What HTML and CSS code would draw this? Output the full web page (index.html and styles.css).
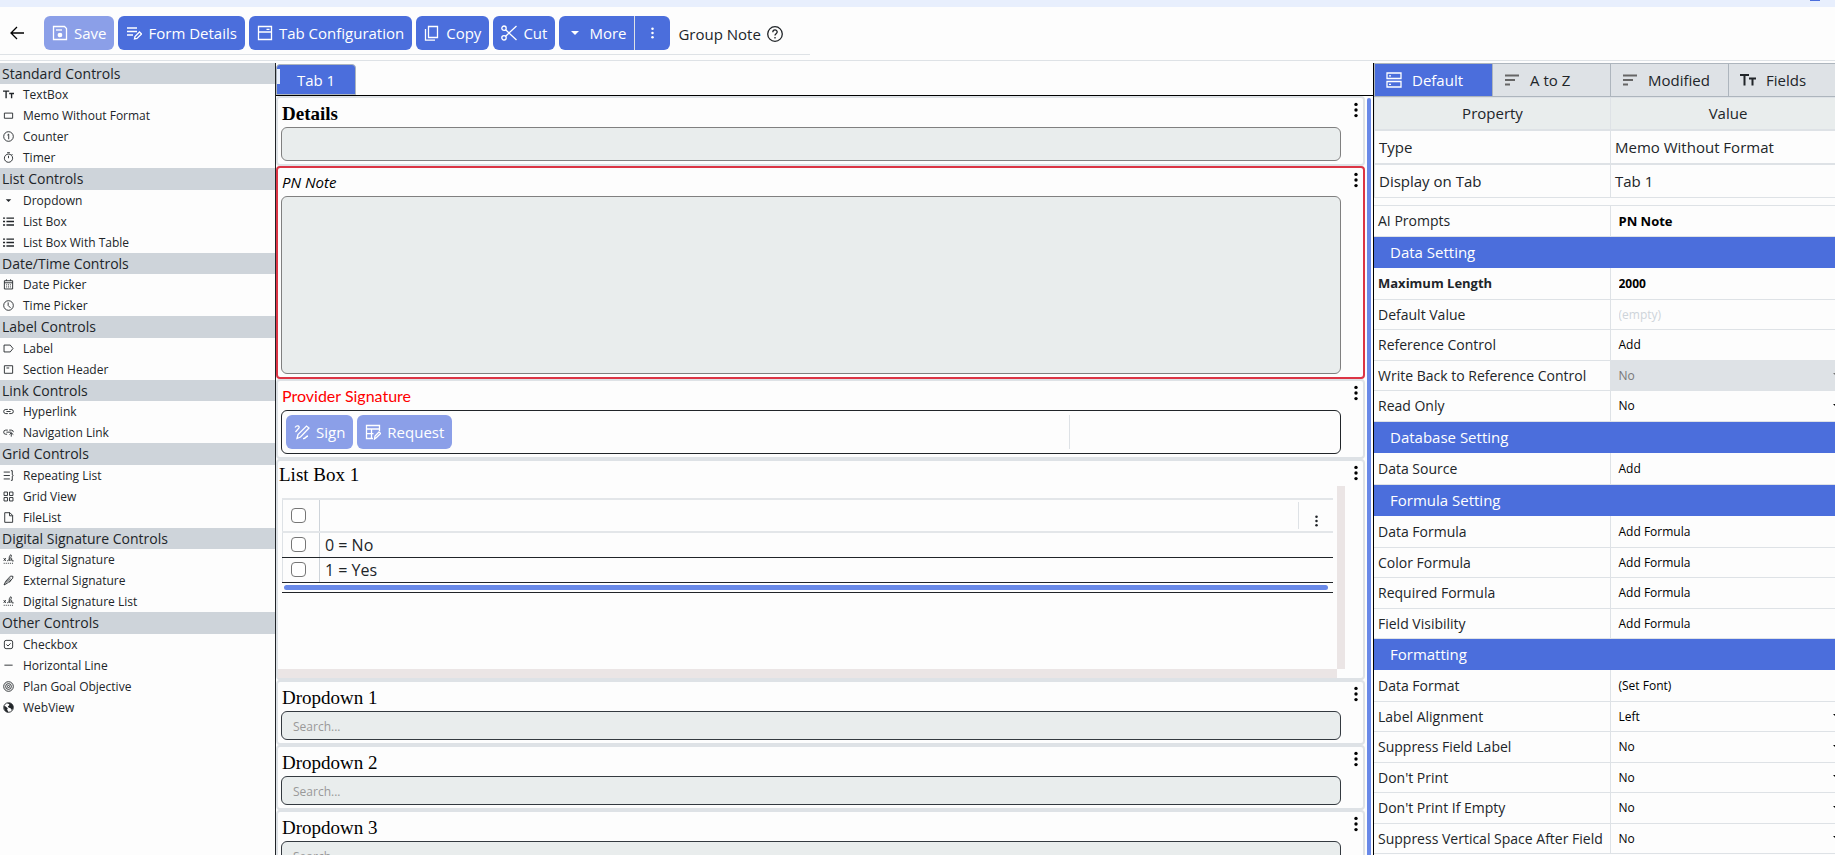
FILE: index.html
```
<!DOCTYPE html>
<html lang="en">
  <head>
    <meta charset="utf-8">
    <title>Form Designer - Group Note</title>
    <link rel="stylesheet" href="styles.css">
  </head>
  <body>
    <!-- icon sprite -->
    <svg class="sprite" aria-hidden="true">
      <symbol id="i-back" viewBox="0 0 16 16"><path d="M15 8H2M8 2L2 8l6 6"/></symbol>
      <symbol id="i-save" viewBox="0 0 16 16"><path d="M1.500 1.500h11l2 2v11h-13z"/><path d="M4 5h6"/><circle cx="8" cy="10" r="1.700" fill="currentColor"/></symbol>
      <symbol id="i-form" viewBox="0 0 16 16"><path d="M1 3h10M1 6.500h10M1 10h6M8.500 14l.5-2.500 4.500-4.500 2 2-4.500 4.500z"/></symbol>
      <symbol id="i-tabs" viewBox="0 0 16 16"><path d="M1.500 1.500h13v13h-13zM1.500 7h13M9.500 4.300h3" /></symbol>
      <symbol id="i-copy" viewBox="0 0 16 16"><path d="M4.500 1.500h9v11h-9zM1.500 4v11.200h9.500"/></symbol>
      <symbol id="i-cut" viewBox="0 0 16 16"><circle cx="3" cy="3.200" r="2.200"/><circle cx="3" cy="12.800" r="2.200"/><path d="M4.600 4.800L15.500 15M4.600 11.200L15.500 1"/></symbol>
      <symbol id="i-caret" viewBox="0 0 16 16"><path d="M4 6h8l-4 4z" fill="currentColor" stroke="none"/></symbol>
      <symbol id="i-dots" viewBox="0 0 4 16"><g fill="currentColor" stroke="none"><circle cx="2" cy="2.400" r="1.700"/><circle cx="2" cy="8" r="1.700"/><circle cx="2" cy="13.600" r="1.700"/></g></symbol>
      <symbol id="i-help" viewBox="0 0 16 16"><circle cx="8" cy="8" r="7.300"/><path d="M5.800 6.200C5.800 3.200 10.200 3.300 10.200 6c0 1.700-2.200 1.700-2.200 3.500"/><path d="M8 11v1.500"/></symbol>
      <symbol id="i-text" viewBox="0 0 16 16"><path d="M0 3h9M4.500 3v10.500M9 6.500h7M12.500 6.500v7" stroke-width="2"/></symbol>
      <symbol id="i-memo" viewBox="0 0 16 16"><path d="M2 4.500h12v7.500H2z"/></symbol>
      <symbol id="i-count" viewBox="0 0 16 16"><circle cx="8" cy="8" r="7"/><path d="M6.300 6L8.300 4.500v7.500"/></symbol>
      <symbol id="i-timer" viewBox="0 0 16 16"><circle cx="8" cy="9" r="6"/><path d="M6 1h4M8 5.500V9M12.500 3l1.500 1.500"/></symbol>
      <symbol id="i-list" viewBox="0 0 16 16"><path d="M0 3h3M5 3h11M0 8h3M5 8h11M0 13h3M5 13h11" stroke-width="2"/></symbol>
      <symbol id="i-date" viewBox="0 0 16 16"><path d="M2 2.500h12v12H2zM2 5.500h12M5 .5v2M11 .5v2"/><path d="M4.500 8.500h7M4.500 11.500h7" stroke-dasharray="1.500 1.300"/></symbol>
      <symbol id="i-clock" viewBox="0 0 16 16"><circle cx="8" cy="8" r="7"/><path d="M7.500 3.500V8l3.500 3.500"/></symbol>
      <symbol id="i-label" viewBox="0 0 16 16"><path d="M1.500 3h9l4 5-4 5h-9z"/></symbol>
      <symbol id="i-section" viewBox="0 0 16 16"><path d="M2 2.500h12v11H2zM5 5.800h4"/></symbol>
      <symbol id="i-link" viewBox="0 0 16 16"><path d="M7 5H4a3 3 0 0 0 0 6h3M9 5h3a3 3 0 0 1 0 6H9M5 8h6"/></symbol>
      <symbol id="i-navlink" viewBox="0 0 16 16"><path d="M7 4.500H4a3 3 0 0 0 0 6h2M9 4.500h3a3 3 0 0 1 3 3M5 7.500h7M12 14V8.500M9.500 11L12 8.500l3 2.500"/></symbol>
      <symbol id="i-repeat" viewBox="0 0 16 16"><path d="M1 3h9M1 8h9M1 13h9M11.500 1h2v6l1.500 1-1.500 1v6h-2"/></symbol>
      <symbol id="i-grid" viewBox="0 0 16 16"><path d="M1.500 1.500h5v5h-5zM9.500 1.500h5v5h-5zM1.500 9.500h5v5h-5zM9.500 9.500h5v5h-5z"/></symbol>
      <symbol id="i-file" viewBox="0 0 16 16"><path d="M2.500 1h7.500l4 4v10h-11.500zM9.500 1v4.500H14"/></symbol>
      <symbol id="i-sig" viewBox="0 0 16 16"><path d="M1 6l3 4M4 6l-3 4M6 10c3-1 7-6 6-8.500-2-1.500-4 4-2.500 8 1.500 1 3-3 3-3l.5 3.500h2.500"/><path d="M1 13.500h14" stroke-dasharray="1.500 1.500"/></symbol>
      <symbol id="i-pen" viewBox="0 0 16 16"><path d="M1.500 14.500L4 9l7-7.500 3.500.5-.5 3-8 7zM4 11l7-6.500M12 7l-3 4"/></symbol>
      <symbol id="i-check" viewBox="0 0 16 16"><rect x="2" y="2" width="12" height="12" rx="2.500"/><path d="M5 8l2.300 2.200L11 6.300"/></symbol>
      <symbol id="i-line" viewBox="0 0 16 16"><path d="M2 7.500h12"/></symbol>
      <symbol id="i-goal" viewBox="0 0 16 16"><circle cx="8" cy="8" r="7"/><circle cx="8" cy="8" r="4.200"/><circle cx="8" cy="8" r="1.600"/></symbol>
      <symbol id="i-web" viewBox="0 0 16 16"><circle cx="8" cy="8" r="7"/><path d="M2 5l5 4-1 2 2 4C3 15 .5 10 2 5zM6 2l3 1v2l-2 1 1 2 3 1 2 3c2-2 3-6 0-9-2-2-5-2-7-1z" fill="currentColor" stroke="none"/></symbol>
      <symbol id="i-sign" viewBox="0 0 16 16"><path d="M1 3.500c2-3 5-1.500 4 .5L1.500 8M3 14.500l1-4L12.500 2l2.500 2-8.500 9zM9 14.500c3 .5 2-2 5-2.500"/></symbol>
      <symbol id="i-request" viewBox="0 0 16 16"><path d="M8 14.500H1.500v-13h13V7M1.500 5h13M1.500 9.700h7M6.500 5v9.500M9.500 15l.5-3 4-4 1.500 1.500-4 4z"/></symbol>
      <symbol id="i-default" viewBox="0 0 16 16"><path d="M1 1h14v5.500H1zM1 9.500h14V15H1zM3 3.800h2M3 12.300h2"/></symbol>
      <symbol id="i-sort" viewBox="0 0 16 16"><path d="M1 3.500h14M1 8h10M1 12.500h5" stroke-width="1.800"/></symbol>
    </svg>

    <div class="strip"><span class="strip-mark"></span></div>

    <header class="header">
      <div class="toolbar">
        <button class="back" aria-label="Back"><svg class="icon"><use href="#i-back"/></svg></button>
        <button class="btn" disabled><svg class="icon"><use href="#i-save"/></svg>Save</button>
        <button class="btn"><svg class="icon"><use href="#i-form"/></svg>Form Details</button>
        <button class="btn"><svg class="icon"><use href="#i-tabs"/></svg>Tab Configuration</button>
        <button class="btn"><svg class="icon"><use href="#i-copy"/></svg>Copy</button>
        <button class="btn"><svg class="icon"><use href="#i-cut"/></svg>Cut</button>
        <div class="btn-group">
          <button class="btn btn-more"><svg class="icon"><use href="#i-caret"/></svg>More</button>
          <button class="btn btn-dots" aria-label="Options"><svg class="dots"><use href="#i-dots"/></svg></button>
        </div>
        <span class="form-name">Group Note <svg class="icon"><use href="#i-help"/></svg></span>
      </div>
    </header>

    <main class="designer">
      <nav class="palette">
        <section class="group">
          <h2>Standard Controls</h2>
          <ul>
            <li><svg class="icon"><use href="#i-text"/></svg>TextBox</li>
            <li><svg class="icon"><use href="#i-memo"/></svg>Memo Without Format</li>
            <li><svg class="icon"><use href="#i-count"/></svg>Counter</li>
            <li><svg class="icon"><use href="#i-timer"/></svg>Timer</li>
          </ul>
        </section>
        <section class="group">
          <h2>List Controls</h2>
          <ul>
            <li><svg class="icon"><use href="#i-caret"/></svg>Dropdown</li>
            <li><svg class="icon"><use href="#i-list"/></svg>List Box</li>
            <li><svg class="icon"><use href="#i-list"/></svg>List Box With Table</li>
          </ul>
        </section>
        <section class="group">
          <h2>Date/Time Controls</h2>
          <ul>
            <li><svg class="icon"><use href="#i-date"/></svg>Date Picker</li>
            <li><svg class="icon"><use href="#i-clock"/></svg>Time Picker</li>
          </ul>
        </section>
        <section class="group">
          <h2>Label Controls</h2>
          <ul>
            <li><svg class="icon"><use href="#i-label"/></svg>Label</li>
            <li><svg class="icon"><use href="#i-section"/></svg>Section Header</li>
          </ul>
        </section>
        <section class="group">
          <h2>Link Controls</h2>
          <ul>
            <li><svg class="icon"><use href="#i-link"/></svg>Hyperlink</li>
            <li><svg class="icon"><use href="#i-navlink"/></svg>Navigation Link</li>
          </ul>
        </section>
        <section class="group">
          <h2>Grid Controls</h2>
          <ul>
            <li><svg class="icon"><use href="#i-repeat"/></svg>Repeating List</li>
            <li><svg class="icon"><use href="#i-grid"/></svg>Grid View</li>
            <li><svg class="icon"><use href="#i-file"/></svg>FileList</li>
          </ul>
        </section>
        <section class="group">
          <h2>Digital Signature Controls</h2>
          <ul>
            <li><svg class="icon"><use href="#i-sig"/></svg>Digital Signature</li>
            <li><svg class="icon"><use href="#i-pen"/></svg>External Signature</li>
            <li><svg class="icon"><use href="#i-sig"/></svg>Digital Signature List</li>
          </ul>
        </section>
        <section class="group">
          <h2>Other Controls</h2>
          <ul>
            <li><svg class="icon"><use href="#i-check"/></svg>Checkbox</li>
            <li><svg class="icon"><use href="#i-line"/></svg>Horizontal Line</li>
            <li><svg class="icon"><use href="#i-goal"/></svg>Plan Goal Objective</li>
            <li><svg class="icon"><use href="#i-web"/></svg>WebView</li>
          </ul>
        </section>
      </nav>

      <div class="canvas">
        <div class="form-tabs"><button class="form-tab">Tab 1</button></div>
        <div class="form-scroll">
          <div class="cards">
            <section class="card">
              <div class="card-body">
                <label class="card-label bold" for="details">Details</label>
                <input class="field" id="details" type="text">
              </div>
              <button class="card-menu" aria-label="Details menu"><svg class="dots"><use href="#i-dots"/></svg></button>
            </section>
            <section class="card selected">
              <div class="card-body">
                <label class="card-label italic" for="pn-note">PN Note</label>
                <textarea class="field memo" id="pn-note"></textarea>
              </div>
              <button class="card-menu" aria-label="PN Note menu"><svg class="dots"><use href="#i-dots"/></svg></button>
            </section>
            <section class="card">
              <div class="card-body">
                <span class="card-label required">Provider Signature</span>
                <div class="signature">
                  <div class="signature-actions">
                    <button class="btn" disabled><svg class="icon"><use href="#i-sign"/></svg>Sign</button>
                    <button class="btn" disabled><svg class="icon"><use href="#i-request"/></svg>Request</button>
                  </div>
                  <div class="signature-date"></div>
                </div>
              </div>
              <button class="card-menu" aria-label="Provider Signature menu"><svg class="dots"><use href="#i-dots"/></svg></button>
            </section>
            <section class="card card-list">
              <div class="card-body">
                <span class="card-label">List Box 1</span>
                <div class="list-area">
                  <div class="list-main">
                    <table class="list-table">
                      <thead>
                        <tr>
                          <th class="tick"><input type="checkbox" aria-label="Select all"></th>
                          <th><div class="list-head"><button class="list-menu" aria-label="Column menu"><svg class="dots"><use href="#i-dots"/></svg></button></div></th>
                        </tr>
                      </thead>
                      <tbody>
                        <tr>
                          <td class="tick"><input type="checkbox" id="opt-no"></td>
                          <td><label for="opt-no">0 = No</label></td>
                        </tr>
                        <tr>
                          <td class="tick"><input type="checkbox" id="opt-yes"></td>
                          <td><label for="opt-yes">1 = Yes</label></td>
                        </tr>
                      </tbody>
                    </table>
                    <div class="list-scroll"><div class="thumb"></div></div>
                  </div>
                  <div class="track"></div>
                </div>
                <div class="track-bottom"></div>
              </div>
              <button class="card-menu" aria-label="List Box 1 menu"><svg class="dots"><use href="#i-dots"/></svg></button>
            </section>
            <section class="card">
              <div class="card-body">
                <label class="card-label" for="dd1">Dropdown 1</label>
                <input class="field search" id="dd1" type="text" placeholder="Search...">
              </div>
              <button class="card-menu" aria-label="Dropdown 1 menu"><svg class="dots"><use href="#i-dots"/></svg></button>
            </section>
            <section class="card">
              <div class="card-body">
                <label class="card-label" for="dd2">Dropdown 2</label>
                <input class="field search" id="dd2" type="text" placeholder="Search...">
              </div>
              <button class="card-menu" aria-label="Dropdown 2 menu"><svg class="dots"><use href="#i-dots"/></svg></button>
            </section>
            <section class="card">
              <div class="card-body">
                <label class="card-label" for="dd3">Dropdown 3</label>
                <input class="field search" id="dd3" type="text" placeholder="Search...">
              </div>
              <button class="card-menu" aria-label="Dropdown 3 menu"><svg class="dots"><use href="#i-dots"/></svg></button>
            </section>
          </div>
          <div class="scrollbar"></div>
        </div>
      </div>

      <aside class="properties">
        <div class="prop-tabs">
          <button class="prop-tab active"><svg class="icon"><use href="#i-default"/></svg>Default</button>
          <button class="prop-tab"><svg class="icon"><use href="#i-sort"/></svg>A to Z</button>
          <button class="prop-tab"><svg class="icon"><use href="#i-sort"/></svg>Modified</button>
          <button class="prop-tab"><svg class="icon"><use href="#i-text"/></svg>Fields</button>
        </div>
        <table class="summary">
          <thead>
            <tr><th>Property</th><th>Value</th></tr>
          </thead>
          <tbody>
            <tr><td>Type</td><td>Memo Without Format</td></tr>
            <tr><td>Display on Tab</td><td>Tab 1</td></tr>
          </tbody>
        </table>
        <table class="props">
          <tbody>
            <tr class="peek"><td></td><td></td></tr>
            <tr><th>AI Prompts</th><td class="bold">PN Note</td></tr>
          </tbody>
          <tbody>
            <tr class="section"><th colspan="2">Data Setting</th></tr>
            <tr><th class="bold"><label for="p-max">Maximum Length</label></th><td class="bold"><input id="p-max" type="text" value="2000"></td></tr>
            <tr><th><label for="p-default">Default Value</label></th><td><input id="p-default" type="text" placeholder="(empty)"></td></tr>
            <tr><th>Reference Control</th><td><button>Add</button></td></tr>
            <tr><th><label for="p-write">Write Back to Reference Control</label></th><td class="off"><div class="pick"><select id="p-write" disabled><option>No</option></select></div></td></tr>
            <tr><th><label for="p-read">Read Only</label></th><td><div class="pick"><select id="p-read"><option>No</option></select></div></td></tr>
          </tbody>
          <tbody>
            <tr class="section"><th colspan="2">Database Setting</th></tr>
            <tr><th>Data Source</th><td><button>Add</button></td></tr>
          </tbody>
          <tbody>
            <tr class="section"><th colspan="2">Formula Setting</th></tr>
            <tr><th>Data Formula</th><td><button>Add Formula</button></td></tr>
            <tr><th>Color Formula</th><td><button>Add Formula</button></td></tr>
            <tr><th>Required Formula</th><td><button>Add Formula</button></td></tr>
            <tr><th>Field Visibility</th><td><button>Add Formula</button></td></tr>
          </tbody>
          <tbody>
            <tr class="section"><th colspan="2">Formatting</th></tr>
            <tr><th>Data Format</th><td><button>(Set Font)</button></td></tr>
            <tr><th><label for="p-align">Label Alignment</label></th><td><div class="pick"><select id="p-align"><option>Left</option></select></div></td></tr>
            <tr><th><label for="p-suppress">Suppress Field Label</label></th><td><div class="pick"><select id="p-suppress"><option>No</option></select></div></td></tr>
            <tr><th><label for="p-print">Don't Print</label></th><td><div class="pick"><select id="p-print"><option>No</option></select></div></td></tr>
            <tr><th><label for="p-empty">Don't Print If Empty</label></th><td><div class="pick"><select id="p-empty"><option>No</option></select></div></td></tr>
            <tr><th><label for="p-space">Suppress Vertical Space After Field</label></th><td><div class="pick"><select id="p-space"><option>No</option></select></div></td></tr>
          </tbody>
        </table>
      </aside>
    </main>
  </body>
</html>
```
FILE: styles.css
```
* {
  box-sizing: border-box;
}

body {
  margin: 0;
  height: 100vh;
  display: flex;
  flex-direction: column;
  overflow: hidden;
  background: #fdfdfd;
  color: #212529;
  font-family: "Open Sans", "Noto Sans", sans-serif;
  font-size: 15px;
}

button, input, select, textarea {
  font: inherit;
  color: inherit;
  margin: 0;
}

button {
  border: 0;
  padding: 0;
  background: none;
  cursor: pointer;
}

.sprite {
  display: none;
}

.icon {
  width: 16px;
  height: 16px;
  flex: none;
  fill: none;
  stroke: currentColor;
  stroke-width: 1.3;
}

.dots {
  width: 4px;
  height: 16px;
  fill: currentColor;
}

.bold {
  font-weight: 700;
}

/* Header */
.strip {
  flex: none;
  height: 7px;
  padding-right: 15px;
  display: flex;
  justify-content: flex-end;
  background: #e8effd;
}

.strip-mark {
  width: 10px;
  height: 1px;
  background: #4b6edc;
}

.header {
  flex: none;
  display: flex;
  padding-bottom: 5px;
  border-bottom: 1px solid #dee2e6;
  margin-bottom: 2px;
}

.toolbar {
  display: flex;
  gap: 4px;
  padding: 9px 27px 4px 8px;
  border-bottom: 1px solid #dee2e6;
}

.back {
  width: 32px;
  padding-left: 1px;
  display: flex;
  align-items: center;
  color: #000;
}

.btn {
  height: 34px;
  padding: 0 8px;
  display: flex;
  align-items: center;
  gap: 6px;
  border-radius: 6px;
  background: #4b6edc;
  color: #fff;
}

.btn:disabled {
  background: #8b9fe8;
}

.btn-group {
  display: flex;
}

.btn-more {
  border-radius: 6px 0 0 6px;
  border-right: 1px solid #dee2e6;
}

.btn-dots {
  width: 35px;
  justify-content: center;
  border-radius: 0 6px 6px 0;
}

.btn-dots .dots, .list-menu .dots {
  width: 3px;
  height: 12px;
}

.form-name {
  display: flex;
  align-items: center;
  gap: 6px;
  padding: 2px 0 0 4px;
}

/* Columns */
.designer {
  flex: 1;
  min-height: 0;
  display: grid;
  grid-template-columns: 276px 1fr 462px;
}

/* Left palette */
.palette {
  border-right: 1px solid #212529;
  overflow: hidden;
}

.group h2 {
  margin: 0;
  padding-left: 2px;
  background: #ced4da;
  font-size: 14px;
  font-weight: 400;
  line-height: 21px;
}

.group:nth-child(even) h2 {
  line-height: 22px;
}

.group ul {
  margin: 0;
  padding: 0;
  list-style: none;
}

.group li {
  display: flex;
  align-items: center;
  gap: 9px;
  height: 21px;
  padding-left: 3px;
  font-size: 12px;
}

.group .icon {
  width: 11px;
  height: 11px;
}

/* Form canvas */
.canvas {
  display: flex;
  flex-direction: column;
  min-width: 0;
  min-height: 0;
}

.form-tabs {
  flex: none;
  display: flex;
  padding-top: 1px;
  border-bottom: 1px solid #000;
}

.form-tab {
  position: relative;
  width: 80px;
  height: 31px;
  border: 1px solid #adb5bd;
  border-radius: 4px 4px 0 0;
  background: #4b6edc;
  color: #fff;
}

.form-tab::before {
  content: "";
  position: absolute;
  left: 0;
  top: 4px;
  width: 3px;
  height: 15px;
  background: #e8effd;
}

.form-scroll {
  flex: 1;
  min-height: 0;
  display: flex;
  overflow: hidden;
}

.cards {
  flex: 1;
}

.scrollbar {
  width: 4px;
  margin: 2px 2px 0 2px;
  border-radius: 2px 2px 0 0;
  background: #6989e8;
}

.card {
  display: flex;
  padding: 0 0 3px 3px;
  border: 2px solid #dee2e6;
  border-radius: 4px;
}

.card.selected {
  border-color: #dc3545;
}

.card-body {
  flex: 1;
  display: flex;
  flex-direction: column;
}

.card-label {
  padding-top: 3px;
  padding-left: 1px;
  font-family: "Liberation Serif", serif;
  font-size: 19px;
  line-height: 26px;
  color: #000;
}

.card-label.italic {
  padding-top: 0;
  font-family: "Open Sans", sans-serif;
  font-size: 15px;
  line-height: 28px;
  font-style: italic;
}

.card-label.required {
  font-family: Lato, sans-serif;
  font-size: 16px;
  padding-top: 0;
  line-height: 29px;
  color: #f00;
}

.card-menu {
  width: 22px;
  height: 16px;
  margin-top: 4px;
  padding-left: 7px;
  display: flex;
  justify-content: center;
  color: #000;
}

.field {
  height: 34px;
  padding: 2px 11px;
  border: 1px solid #808080;
  border-radius: 6px;
  background: #e9eded;
}

.field.memo {
  height: 178px;
  resize: none;
}

.field.search {
  height: 29px;
  padding-top: 4px;
  border-color: #343a40;
  font-size: 12px;
}

.field.search::placeholder {
  color: #999;
}

.signature {
  display: flex;
  height: 44px;
  padding: 4px;
  border: 1px solid #212529;
  border-radius: 6px;
}

.signature-actions {
  flex: 3;
  display: flex;
  gap: 4px;
}

.signature-date {
  flex: 1;
  margin-right: 5px;
  border-left: 1px solid #dee2e6;
}

/* List box */
.card-list {
  padding: 0;
}

.card-list .card-menu {
  width: 18px;
  padding-left: 3px;
}

.card-list .card-label {
  line-height: 22px;
}

.list-area {
  display: flex;
  height: 183px;
}

.list-main {
  flex: 1;
  padding: 12px 4px 0 4px;
}

.list-table {
  width: 100%;
  border-collapse: collapse;
  border-left: 1px solid #dee2e6;
}

.list-table th, .list-table td {
  padding: 0;
  font-weight: 400;
  text-align: left;
}

.list-table th {
  height: 33px;
  border-top: 2px solid #e3e6e9;
  border-bottom: 2px solid #e3e6e9;
}

.list-table td {
  height: 25px;
  padding-left: 5px;
  border-bottom: 1px solid #212529;
  font-size: 16px;
}

.list-table label {
  display: block;
  line-height: 22px;
}

.list-table .tick {
  width: 37px;
  padding-left: 8px;
  border-right: 1px solid #ced4da;
}

.tick input {
  display: block;
  width: 15px;
  height: 15px;
  appearance: none;
  border: 1px solid #767676;
  border-radius: 4px;
  background: #fff;
}

.list-head {
  display: flex;
  justify-content: flex-end;
}

.list-menu {
  width: 35px;
  height: 27px;
  padding: 10px 0 0 1px;
  display: flex;
  align-items: center;
  justify-content: center;
  border-left: 1px solid #dee2e6;
}

.list-scroll {
  padding: 2px 5px 2px 2px;
  border-bottom: 1px solid #212529;
}

.thumb {
  height: 5px;
  border-radius: 3px;
  background: #6989e8;
}

.track {
  width: 8px;
  background: #ebe5e5;
}

.track-bottom {
  height: 9px;
  margin-right: 8px;
  background: #ebe5e5;
}

/* Right panel */
.properties {
  border-left: 1px solid #000;
  overflow: hidden;
}

.prop-tabs {
  display: flex;
  height: 34px;
  padding-left: 1px;
  background: #adb5bd;
  border-top: 1px solid #adb5bd;
  border-bottom: 1px solid #adb5bd;
  gap: 1px;
}

.prop-tab {
  flex: 0 0 117px;
  display: flex;
  align-items: center;
  gap: 10px;
  padding-left: 11px;
  background: #dee2e6;
}

.prop-tab.active {
  background: #4b6edc;
  color: #fff;
}

.prop-tab:nth-child(2) .icon, .prop-tab:nth-child(3) .icon {
  color: #666;
}

/* the grids are a little wider than the panel, which clips them */
.summary, .props {
  width: calc(100% + 10px);
  table-layout: fixed;
  border-collapse: collapse;
}

.summary th, .summary td {
  height: 34px;
  padding: 0 4px;
  border: 1px solid #dee2e6;
  border-right: 0;
  border-bottom-width: 2px;
}

.summary th {
  height: 32px;
  background: #e9eded;
  font-weight: 400;
}

.summary tr:last-child td {
  border-bottom-width: 1px;
}

.summary th:first-child, .props td:first-child, .props th:first-child {
  width: 236px;
}

.props tr {
  height: 30px;
}

.props tr:nth-child(even) {
  height: 31px;
}

.props th, .props td {
  padding: 0 0 0 4px;
  border-bottom: 1px solid #dee2e6;
  border-right: 1px solid #dee2e6;
  font-size: 14px;
  font-weight: 400;
  text-align: left;
}

.props td {
  padding-left: 8px;
  border-right: 0;
  color: #000;
}

.props .bold {
  font-size: 13px;
  font-weight: 700;
}

.props .peek {
  height: 7px;
}

.props .section {
  height: 32px;
}

.props .section th {
  padding-left: 16px;
  border: 0;
  background: #4b6edc;
  color: #fff;
  font-size: 15px;
}

.props .off {
  background: #dee2e6;
  color: #777;
}

.props td button, .props td input, .props td select {
  display: block;
  height: 22px;
  padding: 0;
  border: 0;
  background: none;
  font-size: 12px;
  appearance: none;
  opacity: 1;
}

.props td input {
  width: 100%;
}

.props td input::placeholder {
  color: #ced4da;
}

.pick {
  display: flex;
  align-items: center;
  overflow: hidden;
}

.pick select {
  flex: 1;
}

.pick::after {
  content: "";
  margin-right: 4px;
  border: 4px solid transparent;
  border-top-color: currentColor;
  border-bottom: 0;
}
```
